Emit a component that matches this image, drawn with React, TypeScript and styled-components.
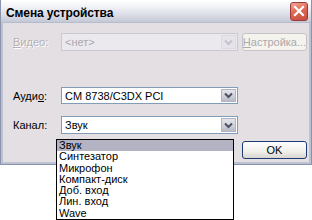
import React from "react";
import styled, { createGlobalStyle } from "styled-components";

const GlobalStyle = createGlobalStyle`
  html, body {
    margin: 0;
    padding: 0;
    background: #ffffff;
  }
  body {
    font-family: "Liberation Sans", Arial, sans-serif;
    font-size: 11px;
    color: #000;
  }
`;

const Screen = styled.div`
  position: relative;
  width: 312px;
  height: 220px;
  overflow: hidden;
`;

const Window = styled.div`
  width: 312px;
  height: 165px;
  box-sizing: border-box;
  display: flex;
  flex-direction: column;
  background: #e3dfe3;
  border: 1px solid #8a92ac;
  border-top: none;
`;

const TitleBar = styled.div`
  height: 22px;
  flex: none;
  display: flex;
  align-items: center;
  justify-content: space-between;
  padding: 0 3px 0 5px;
  background: linear-gradient(180deg, #ffffff 0%, #f2f3f7 30%, #d9dce6 70%, #c4c8d6 100%);
  border-bottom: 1px solid #b6bccc;
`;

const Title = styled.span`
  font-weight: bold;
  font-size: 12px;
  letter-spacing: -0.1px;
  padding-top: 3px;
`;

const CloseButton = styled.div`
  width: 18px;
  height: 19px;
  box-sizing: border-box;
  border: 1px solid #9a3b3b;
  border-radius: 3px;
  background: linear-gradient(160deg, #f3a795 0%, #e06a55 45%, #c64a3c 100%);
  display: flex;
  align-items: center;
  justify-content: center;
`;

const Body = styled.div`
  flex: 1;
  display: flex;
  flex-direction: column;
  padding: 0 0 0 10px;
  border-left: 2px solid #bcc2d2;
  border-right: 2px solid #bcc2d2;
  border-bottom: 2px solid #bcc2d2;
`;

const Row = styled.div<{ $top: number }>`
  display: grid;
  grid-template-columns: 44px 177px 65px;
  column-gap: 4px;
  align-items: center;
  margin-top: ${(p) => p.$top}px;
`;

const Label = styled.span<{ $disabled?: boolean }>`
  color: ${(p) => (p.$disabled ? "#b4b0b4" : "#000")};
  text-shadow: ${(p) => (p.$disabled ? "1px 1px 0 #fff" : "none")};
  u {
    text-decoration: underline;
  }
`;

const Combo = styled.div<{ $disabled?: boolean; $h: number }>`
  height: ${(p) => p.$h}px;
  box-sizing: border-box;
  display: flex;
  align-items: center;
  border: 1px solid ${(p) => (p.$disabled ? "#cac8d0" : "#7f9db9")};
  background: ${(p) => (p.$disabled ? "#ebe9ed" : "#ffffff")};
  color: ${(p) => (p.$disabled ? "#aca8ac" : "#000")};
  padding-left: 3px;
`;

const ComboText = styled.span`
  flex: 1;
  white-space: nowrap;
  overflow: hidden;
`;

const ArrowBox = styled.div<{ $disabled?: boolean }>`
  width: 15px;
  align-self: stretch;
  margin: 1px;
  box-sizing: border-box;
  display: flex;
  align-items: center;
  justify-content: center;
  background: ${(p) =>
    p.$disabled
      ? "#e6e4ea"
      : "linear-gradient(180deg, #e4e4ea 0%, #cfcfd8 60%, #b9b9c6 100%)"};
  border: 1px solid ${(p) => (p.$disabled ? "#dcdae0" : "#b0b4c4")};
`;

const Button = styled.div<{ $disabled?: boolean; $h: number }>`
  height: ${(p) => p.$h}px;
  box-sizing: border-box;
  display: flex;
  align-items: center;
  justify-content: center;
  border: 1px solid ${(p) => (p.$disabled ? "#c6c2c6" : "#1f3b73")};
  border-radius: 3px;
  background: ${(p) =>
    p.$disabled ? "#f4f3ee" : "linear-gradient(180deg, #ffffff 0%, #f0efe9 60%, #d8d6d0 100%)"};
  color: ${(p) => (p.$disabled ? "#aca8ac" : "#000")};
  white-space: nowrap;
`;

const ButtonCell = styled.div`
  grid-column: 3;
`;

const DropList = styled.ul`
  position: absolute;
  left: 56px;
  top: 139px;
  width: 178px;
  margin: 0;
  padding: 0;
  list-style: none;
  box-sizing: border-box;
  border: 1px solid #000;
  background: #fff;
`;

const Item = styled.li<{ $active?: boolean }>`
  height: 11.3px;
  line-height: 11px;
  padding-left: 2px;
  font-size: 11px;
  white-space: nowrap;
  background: ${(p) => (p.$active ? "#b3b3c4" : "transparent")};
`;

function Chevron({ disabled }: { disabled?: boolean }) {
  return (
    <svg width="9" height="7" viewBox="0 0 9 7">
      <path
        d="M1 1.5 L4.5 5 L8 1.5"
        fill="none"
        stroke={disabled ? "#c4c2ca" : "#4d5164"}
        strokeWidth="2"
      />
    </svg>
  );
}

const channels = ["Звук", "Синтезатор", "Микрофон", "Компакт-диск", "Доб. вход", "Лин. вход", "Wave"];

export default function App() {
  return (
    <>
      <GlobalStyle />
      <Screen>
        <Window>
          <TitleBar>
            <Title>Смена устройства</Title>
            <CloseButton>
              <svg width="12" height="12" viewBox="0 0 12 12">
                <path d="M2 2 L10 10 M10 2 L2 10" stroke="#fff" strokeWidth="2.2" strokeLinecap="square" />
              </svg>
            </CloseButton>
          </TitleBar>
          <Body>
            <Row $top={10}>
              <Label $disabled>
                <u>В</u>идео:
              </Label>
              <Combo $disabled $h={18}>
                <ComboText>&lt;нет&gt;</ComboText>
                <ArrowBox $disabled>
                  <Chevron disabled />
                </ArrowBox>
              </Combo>
              <Button $disabled $h={18}>
                <span>
                  <u>Н</u>астройка...
                </span>
              </Button>
            </Row>
            <Row $top={36}>
              <Label>
                Ауди<u>о</u>:
              </Label>
              <Combo $h={17}>
                <ComboText>CM 8738/C3DX PCI</ComboText>
                <ArrowBox>
                  <Chevron />
                </ArrowBox>
              </Combo>
            </Row>
            <Row $top={12}>
              <Label>Канал:</Label>
              <Combo $h={18}>
                <ComboText>Звук</ComboText>
                <ArrowBox>
                  <Chevron />
                </ArrowBox>
              </Combo>
            </Row>
            <Row $top={7}>
              <ButtonCell>
                <Button $h={18}>OK</Button>
              </ButtonCell>
            </Row>
          </Body>
        </Window>
        <DropList>
          {channels.map((c, i) => (
            <Item key={c} $active={i === 0}>
              {c}
            </Item>
          ))}
        </DropList>
      </Screen>
    </>
  );
}
